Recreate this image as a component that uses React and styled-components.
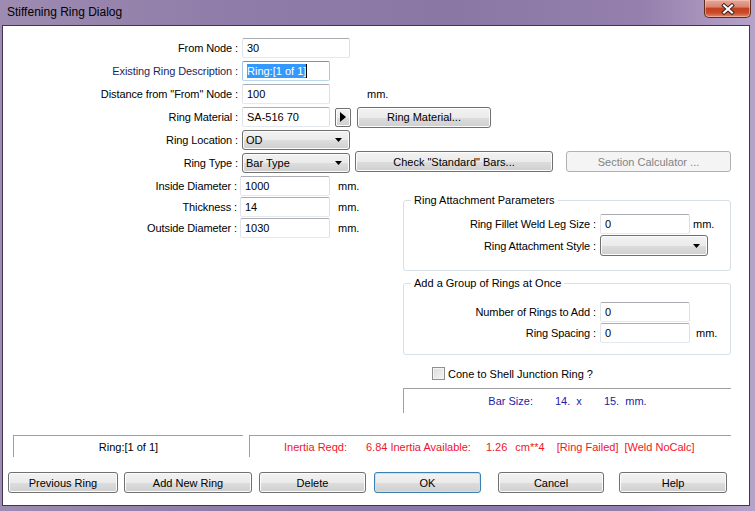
import styled, { createGlobalStyle, css } from "styled-components";

const GlobalStyle = createGlobalStyle`
  html, body {
    margin: 0;
    padding: 0;
  }
  body {
    font-family: "Liberation Sans", Arial, sans-serif;
    font-size: 11px;
    color: #000;
  }
`;

const Window = styled.div`
  width: 755px;
  height: 511px;
  display: flex;
  flex-direction: column;
  overflow: hidden;
  background: linear-gradient(
    90deg,
    #9d8bb1 0%,
    #8f7ca8 30%,
    #8a77a3 60%,
    #9580ad 85%,
    #b7a3c9 100%
  );
`;

const TitleBar = styled.div`
  height: 25px;
  display: flex;
  align-items: flex-start;
  justify-content: space-between;
`;

const Title = styled.div`
  padding-left: 7px;
  line-height: 24px;
  font-size: 12px;
  color: #000;
`;

const CloseButton = styled.div`
  width: 45px;
  height: 17px;
  margin-right: 4px;
  display: flex;
  align-items: center;
  justify-content: center;
  border: 1px solid #5e2a22;
  border-top: none;
  border-radius: 0 0 5px 5px;
  background: linear-gradient(
    to bottom,
    #e6a99b 0%,
    #d98470 40%,
    #c4401f 50%,
    #c94a2a 75%,
    #e0896a 100%
  );
  box-shadow: inset 0 0 0 1px rgba(255, 210, 200, 0.5);
`;

const Client = styled.div`
  flex: 1;
  margin: 0 5px 5px 2px;
  border: 1px solid #3e3652;
  background: #fff;
  display: flex;
  flex-direction: column;
`;

const TopSection = styled.div`
  padding-top: 12px;
  display: flex;
  flex-direction: column;
  gap: 3px;
`;

const Row = styled.div`
  display: flex;
  align-items: center;
  height: 20px;
`;

const Label = styled.div`
  width: ${(p) => p.$w}px;
  margin-right: ${(p) => p.$gap ?? 4}px;
  text-align: right;
  white-space: nowrap;
  letter-spacing: -0.1px;
  color: ${(p) => (p.$navy ? "#1c1f5e" : "#000")};
`;

const TextBox = styled.div`
  box-sizing: border-box;
  width: ${(p) => p.$w}px;
  height: 20px;
  padding-left: 4px;
  display: flex;
  align-items: center;
  border: 1px solid;
  border-color: #abadb3 #dbdfe6 #e3e9ef #e2e3ea;
  border-radius: 2px;
  background: #fff;
  white-space: nowrap;
  ${(p) =>
    p.$focused &&
    css`
      border-color: #5b9bd5 #a4c9e3 #b7d9ed #a4c9e3;
    `}
`;

const Selection = styled.span`
  background: #3399ff;
  color: #fff;
  padding: 1px 0;
  border-right: 1px solid #000;
`;

const Unit = styled.span`
  margin-left: ${(p) => p.$ml}px;
`;

const buttonFace = css`
  box-sizing: border-box;
  border: 1px solid #707070;
  border-radius: 3px;
  background: linear-gradient(
    to bottom,
    #f2f2f2 0%,
    #ebebeb 50%,
    #dddddd 51%,
    #cfcfcf 100%
  );
  box-shadow: inset 0 0 0 1px #fcfcfc;
`;

const Combo = styled.div`
  ${buttonFace}
  width: ${(p) => p.$w}px;
  height: ${(p) => p.$h ?? 20}px;
  display: flex;
  align-items: center;
  justify-content: space-between;
  padding: 0 7px 0 3px;
`;

const ArrowButton = styled.div`
  ${buttonFace}
  width: 16px;
  height: 19px;
  margin-left: 5px;
  border-radius: 2px;
  display: flex;
  align-items: center;
  justify-content: center;
`;

const Button = styled.div`
  ${buttonFace}
  width: ${(p) => p.$w}px;
  height: 21px;
  margin-left: ${(p) => p.$ml ?? 0}px;
  margin-top: ${(p) => p.$mt ?? 0}px;
  display: flex;
  align-items: center;
  justify-content: center;
  white-space: nowrap;
  ${(p) =>
    p.$default &&
    css`
      border-color: #3c7fb1;
      box-shadow: inset 0 0 0 1px #bfe6f7;
    `}
  ${(p) =>
    p.$disabled &&
    css`
      border-color: #adb2b5;
      background: #f4f4f4;
      box-shadow: none;
      color: #838383;
    `}
`;

const LowerSection = styled.div`
  display: flex;
  margin-top: 3px;
`;

const LeftCol = styled.div`
  width: 400px;
  display: flex;
  flex-direction: column;
  gap: 1px;
`;

const RightCol = styled.div`
  width: 328px;
  display: flex;
  flex-direction: column;
`;

const Group = styled.fieldset`
  margin: ${(p) => p.$mt}px 0 0;
  padding: ${(p) => p.$pt}px 0 ${(p) => p.$pb}px;
  border: 1px solid #d5dfe5;
  border-radius: 3px;
  min-width: 0;
  display: flex;
  flex-direction: column;
  gap: 1px;
`;

const Legend = styled.legend`
  margin-left: 7px;
  padding: 0 3px;
  line-height: 14px;
  font-size: 11px;
`;

const GroupRow = styled.div`
  display: flex;
  align-items: center;
  height: ${(p) => p.$h ?? 20}px;
`;

const CheckRow = styled.div`
  margin-top: 12px;
  padding-left: 29px;
  height: 13px;
  display: flex;
  align-items: center;
`;

const CheckBox = styled.div`
  box-sizing: border-box;
  width: 13px;
  height: 13px;
  margin-right: 3px;
  border: 1px solid #8e8f8f;
  background: linear-gradient(135deg, #dcdcdc 0%, #f4f4f4 100%);
  box-shadow: inset 0 0 0 1px #f4f4f4;
`;

const SunkenPanel = styled.div`
  box-sizing: border-box;
  width: ${(p) => (p.$w ? `${p.$w}px` : "auto")};
  height: ${(p) => p.$h}px;
  border-top: 1px solid #a0a0a0;
  border-left: 1px solid #a0a0a0;
  display: flex;
  align-items: center;
  justify-content: ${(p) => (p.$start ? "flex-start" : "center")};
  padding-left: ${(p) => p.$pl ?? 0}px;
  white-space: nowrap;
`;

const BarPanel = styled(SunkenPanel)`
  margin-top: 8px;
  color: #1c1ca6;
`;

const Span = styled.span`
  margin-left: ${(p) => p.$ml ?? 0}px;
`;

const StatusBar = styled.div`
  margin-top: 22px;
  padding-left: 10px;
  display: flex;
  gap: 6px;
`;

const RedText = styled.div`
  color: #f01428;
  display: flex;
`;

const ButtonRow = styled.div`
  margin-top: 15px;
  padding-left: 5px;
  display: flex;
`;

const DownArrow = () => (
  <svg width="7" height="4" viewBox="0 0 7 4">
    <path d="M0 0h7L3.5 4z" fill="#000" />
  </svg>
);

const RightArrow = () => (
  <svg width="6" height="10" viewBox="0 0 6 10">
    <path d="M0 0L6 5L0 10z" fill="#000" />
  </svg>
);

const CloseX = () => (
  <svg width="14" height="12" viewBox="0 0 14 12">
    <path d="M3 2.5L11 9.5M11 2.5L3 9.5" stroke="#3a2626" strokeWidth="4" strokeLinecap="square" />
    <path d="M3 2.5L11 9.5M11 2.5L3 9.5" stroke="#fff" strokeWidth="2" strokeLinecap="square" />
  </svg>
);

const App = () => {
  return (
    <Window>
      <GlobalStyle />
      <TitleBar>
        <Title>Stiffening Ring Dialog</Title>
        <CloseButton>
          <CloseX />
        </CloseButton>
      </TitleBar>
      <Client>
        <TopSection>
          <Row>
            <Label $w={235}>From Node :</Label>
            <TextBox $w={108}>30</TextBox>
          </Row>
          <Row>
            <Label $w={235} $navy>
              Existing Ring Description :
            </Label>
            <TextBox $w={88} $focused>
              <Selection>Ring:[1 of 1]</Selection>
            </TextBox>
          </Row>
          <Row>
            <Label $w={235}>Distance from "From" Node :</Label>
            <TextBox $w={88}>100</TextBox>
            <Unit $ml={37}>mm.</Unit>
          </Row>
          <Row>
            <Label $w={235}>Ring Material :</Label>
            <TextBox $w={88}>SA-516 70</TextBox>
            <ArrowButton>
              <RightArrow />
            </ArrowButton>
            <Button $w={134} $ml={6}>
              Ring Material...
            </Button>
          </Row>
          <Row>
            <Label $w={235}>Ring Location :</Label>
            <Combo $w={108}>
              <span>OD</span>
              <DownArrow />
            </Combo>
          </Row>
          <Row>
            <Label $w={235}>Ring Type :</Label>
            <Combo $w={108}>
              <span>Bar Type</span>
              <DownArrow />
            </Combo>
            <Button $w={198} $ml={5} $mt={-3}>
              Check "Standard" Bars...
            </Button>
            <Button $w={165} $ml={13} $mt={-3} $disabled>
              Section Calculator ...
            </Button>
          </Row>
        </TopSection>

        <LowerSection>
          <LeftCol>
            <Row>
              <Label $w={234} $gap={3}>
                Inside Diameter :
              </Label>
              <TextBox $w={90}>1000</TextBox>
              <Unit $ml={8}>mm.</Unit>
            </Row>
            <Row>
              <Label $w={234} $gap={3}>
                Thickness :
              </Label>
              <TextBox $w={90}>14</TextBox>
              <Unit $ml={8}>mm.</Unit>
            </Row>
            <Row>
              <Label $w={234} $gap={3}>
                Outside Diameter :
              </Label>
              <TextBox $w={90}>1030</TextBox>
              <Unit $ml={8}>mm.</Unit>
            </Row>
          </LeftCol>

          <RightCol>
            <Group $mt={17} $pt={7} $pb={14}>
              <Legend>Ring Attachment Parameters</Legend>
              <GroupRow>
                <Label $w={192}>Ring Fillet Weld Leg Size :</Label>
                <TextBox $w={90}>0</TextBox>
                <Unit $ml={3}>mm.</Unit>
              </GroupRow>
              <GroupRow $h={21}>
                <Label $w={192}>Ring Attachment Style :</Label>
                <Combo $w={108} $h={21}>
                  <span />
                  <DownArrow />
                </Combo>
              </GroupRow>
            </Group>

            <Group $mt={5} $pt={12} $pb={11}>
              <Legend>Add a Group of Rings at Once</Legend>
              <GroupRow>
                <Label $w={192}>Number of Rings to Add :</Label>
                <TextBox $w={90}>0</TextBox>
              </GroupRow>
              <GroupRow>
                <Label $w={192}>Ring Spacing :</Label>
                <TextBox $w={90}>0</TextBox>
                <Unit $ml={6}>mm.</Unit>
              </GroupRow>
            </Group>

            <CheckRow>
              <CheckBox />
              <span>Cone to Shell Junction Ring ?</span>
            </CheckRow>

            <BarPanel $h={25}>
              <Span>Bar Size:</Span>
              <Span $ml={22}>14.&nbsp;&nbsp;x</Span>
              <Span $ml={22}>15.&nbsp;&nbsp;mm.</Span>
            </BarPanel>
          </RightCol>
        </LowerSection>

        <StatusBar>
          <SunkenPanel $w={230} $h={22}>
            Ring:[1 of 1]
          </SunkenPanel>
          <SunkenPanel $w={482} $h={22} $start $pl={34}>
            <RedText>
              <Span>Inertia Reqd:</Span>
              <Span $ml={19}>6.84</Span>
              <Span $ml={3}>Inertia Available:</Span>
              <Span $ml={15}>1.26</Span>
              <Span $ml={8}>cm**4</Span>
              <Span $ml={12}>[Ring Failed]</Span>
              <Span $ml={6}>[Weld NoCalc]</Span>
            </RedText>
          </SunkenPanel>
        </StatusBar>

        <ButtonRow>
          <Button $w={110}>Previous Ring</Button>
          <Button $w={128} $ml={6}>
            Add New Ring
          </Button>
          <Button $w={107} $ml={7}>
            Delete
          </Button>
          <Button $w={107} $ml={8} $default>
            OK
          </Button>
          <Button $w={106} $ml={17}>
            Cancel
          </Button>
          <Button $w={108} $ml={15}>
            Help
          </Button>
        </ButtonRow>
      </Client>
    </Window>
  );
};

export default App;
